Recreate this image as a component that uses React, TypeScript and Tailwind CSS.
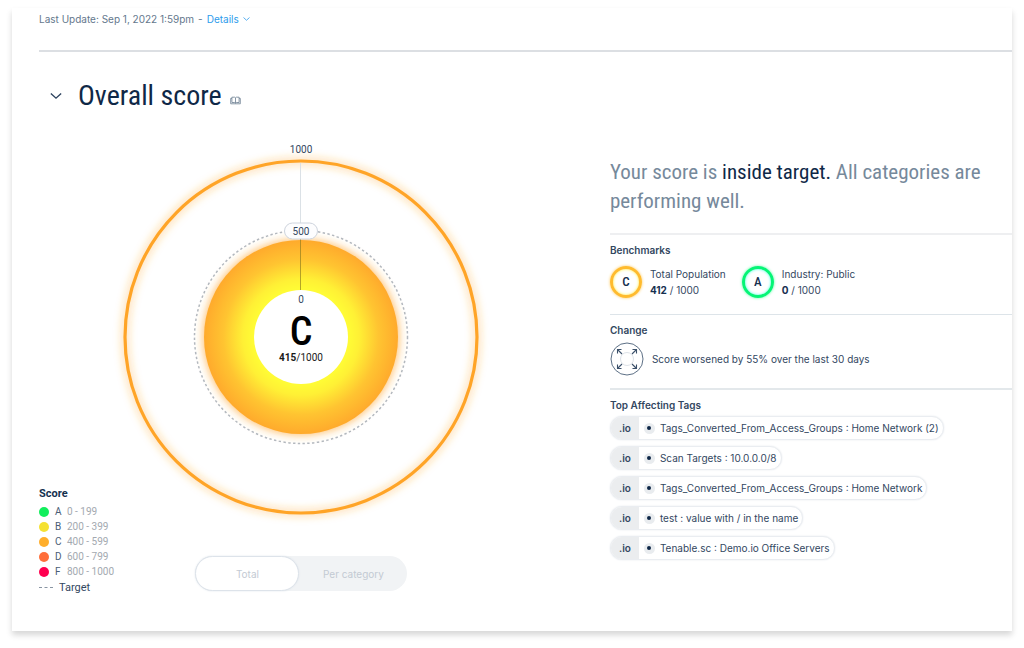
import React from "react";

const grades = [
  { grade: "A", range: "0 - 199", dot: "bg-[#12ee5c]" },
  { grade: "B", range: "200 - 399", dot: "bg-[#f5e132]" },
  { grade: "C", range: "400 - 599", dot: "bg-[#ffae2b]" },
  { grade: "D", range: "600 - 799", dot: "bg-[#ff6e3a]" },
  { grade: "F", range: "800 - 1000", dot: "bg-[#ff0050]" },
];

const tags = [
  "Tags_Converted_From_Access_Groups : Home Network (2)",
  "Scan Targets : 10.0.0.0/8",
  "Tags_Converted_From_Access_Groups : Home Network",
  "test : value with / in the name",
  "Tenable.sc : Demo.io Office Servers",
];

const benchmarks = [
  {
    grade: "C",
    name: "Total Population",
    score: "412",
    ring: "border-[#ffbb2e] shadow-[0_0_3px_#ffc95c,inset_0_0_3px_#fff03a]",
  },
  {
    grade: "A",
    name: "Industry: Public",
    score: "0",
    ring: "border-[#05f576] shadow-[0_0_3px_#5dfba4,inset_0_0_3px_#3dffe0]",
  },
];

const condensed = "font-['Roboto_Condensed',sans-serif]";

function Chevron({ className }: { className: string }) {
  return (
    <svg viewBox="0 0 14 8" className={className} fill="none" stroke="currentColor" strokeWidth="1.6" aria-hidden="true">
      <path d="M1 1l6 5.5L13 1" />
    </svg>
  );
}

function BookIcon() {
  return (
    <svg viewBox="0 0 11 9" className="h-[9px] w-[11px]" fill="none" stroke="#6b7d91" strokeWidth="0.8" aria-hidden="true">
      <path d="M5.5 1.8L4.700 1.200H1.900v5.300h2.800l.8.6.8-.6h2.800V1.200H6.300zM5.500 1.800v5.200" />
      <path d="M1.900 2.400H.7v5.400h9.600V2.400H9.100" />
    </svg>
  );
}

function ScoreChart() {
  return (
    <svg
      viewBox="-178 -197 356 376"
      className="w-[356px] max-w-full overflow-visible"
      role="img"
      aria-label="Overall score C, 415 out of 1000, target 500"
    >
      <defs>
        <radialGradient id="core" gradientUnits="userSpaceOnUse" cx="0" cy="0" r="97">
          <stop offset="0.5" stopColor="#fffb35" />
          <stop offset="0.6" stopColor="#fff035" />
          <stop offset="0.8" stopColor="#ffc431" />
          <stop offset="1" stopColor="#ffaa2c" />
        </radialGradient>
        <filter id="glow" x="-20%" y="-20%" width="140%" height="140%">
          <feGaussianBlur stdDeviation="4.500" />
        </filter>
      </defs>
      <circle r="176" fill="none" stroke="#ffa427" strokeOpacity="0.42" strokeWidth="6" filter="url(#glow)" />
      <circle r="176" fill="none" stroke="#ffa427" strokeWidth="3.200" />
      <circle r="98" fill="#ffa427" fillOpacity="0.7" filter="url(#glow)" />
      <circle r="106.500" fill="none" stroke="#b3b8be" strokeWidth="1.500" strokeDasharray="2.400 2.400" />
      <circle r="97" fill="url(#core)" />
      <path d="M-.5-174v67" stroke="#dbe1e6" />
      <path d="M-.5-98v51" stroke="#8a7a1e" strokeOpacity="0.65" />
      <circle r="47" fill="#fff" />
      <rect x="-16.500" y="-114" width="33" height="16" rx="8" fill="#fdfdfe" stroke="#ced4dd" />
      <g className="font-[Roboto,sans-serif]" textAnchor="middle" fontSize="10" fill="#33475f">
        <text y="-184">1000</text>
        <text y="-102">500</text>
        <text y="-34">0</text>
      </g>
      <text y="8" textAnchor="middle" fontSize="40" fill="#000" fontWeight="500" className="font-['Roboto_Condensed',sans-serif]">
        C
      </text>
      <text y="24" textAnchor="middle" fontSize="10" fill="#1a1a1a" className="font-[Roboto,sans-serif]">
        <tspan fontWeight="700">415</tspan>/1000
      </text>
    </svg>
  );
}

function ExpandIcon() {
  return (
    <svg viewBox="0 0 34 34" className="h-[34px] w-[34px]" fill="none" aria-hidden="true">
      <circle cx="17" cy="17" r="16" stroke="#5d7086" />
      <circle cx="17" cy="17" r="6.500" stroke="#dde2e8" />
      <g stroke="#3b506a" strokeWidth="1.100">
        <path d="M12 12L8 8M7.500 11.500v-4h4" />
        <path d="M22 12l4-4M22.500 7.500h4v4" />
        <path d="M12 22l-4 4M7.500 22.500v4h4" />
        <path d="M22 22l4 4M22.500 26.500h4v-4" />
      </g>
    </svg>
  );
}

export default function App() {
  return (
    <div className="bg-white px-3 pb-4 pt-2 font-[Inter,Roboto,sans-serif] text-[10px] leading-4 text-[#33475f]">
      <main className="bg-white pb-9 pl-[27px] shadow-[0_4px_6px_rgba(0,0,0,0.16)]">
        <header className="flex h-11 items-start gap-1 border-b-2 border-[#dcdfe3] pt-[3px] text-[#64788d]">
          <span>Last Update: Sep 1, 2022 1:59pm</span>
          <span>-</span>
          <button type="button" className="flex items-center gap-1 text-[#2d9cec]">
            Details
            <Chevron className="h-1 w-[7px]" />
          </button>
        </header>

        <div className="flex items-center gap-4 pl-[11px] pt-6">
          <button type="button" aria-label="Collapse overall score" className="text-[#2c425e]">
            <Chevron className="h-2 w-3" />
          </button>
          <div className="flex items-center gap-2">
            <h1 className={`${condensed} text-[28px] leading-10 text-[#0f2847]`}>Overall score</h1>
            <span className="pt-2">
              <BookIcon />
            </span>
          </div>
        </div>

        <div className="grid grid-cols-[minmax(0,1.42fr)_minmax(0,1fr)] pt-6">
          <section className="grid grid-cols-[80px_1fr_80px] pr-[46px]">
            <div className="self-end font-[Roboto,sans-serif] leading-[15px]">
              <h2 className="pb-[3px] text-[11px] font-bold text-[#16304f]">Score</h2>
              <ul>
                {grades.map((g) => (
                  <li key={g.grade} className="flex items-center whitespace-nowrap">
                    <span className={`mr-1.5 size-[10px] rounded-full ${g.dot}`} />
                    <span className="w-3 text-[#4a5d75]">{g.grade}</span>
                    <span className="text-[#a3a9b0]">{g.range}</span>
                  </li>
                ))}
                <li className="flex items-center gap-1.5 pt-px text-[11px]">
                  <span className="w-[14px] border-t border-dashed border-[#8995a3]" />
                  Target
                </li>
              </ul>
            </div>
            <div className="flex flex-col items-center gap-10 pb-1">
              <ScoreChart />
              <div className="flex h-[35px] w-[212px] rounded-full bg-[#f1f3f5] text-[#c3cad3]">
                <button
                  type="button"
                  aria-pressed="true"
                  className="w-[104px] rounded-full border border-[#dde3ea] bg-white shadow-[0_0_2px_#dde3ea]"
                >
                  Total
                </button>
                <button type="button" aria-pressed="false" className="flex-1">
                  Per category
                </button>
              </div>
            </div>
          </section>

          <section className="pt-[18px]">
            <p className={`${condensed} pb-[17px] pr-4 text-[21px] leading-[29px] text-[#76899b]`}>
              Your score is <strong className="font-normal text-[#0f2847]">inside target.</strong> All categories are
              performing well.
            </p>

            <div className="border-t-2 border-[#eeeff1] pb-4 pt-[7px]">
              <h2 className="font-semibold">Benchmarks</h2>
              <div className="flex gap-4 pt-2">
                {benchmarks.map((b) => (
                  <div key={b.name} className="flex items-center gap-2">
                    <span
                      className={`flex size-8 items-center justify-center rounded-full border-3 font-['Roboto_Condensed',sans-serif] text-[13px] font-medium text-[#16304f] ${b.ring}`}
                    >
                      {b.grade}
                    </span>
                    <div>
                      <div>{b.name}</div>
                      <div>
                        <b className="text-[#16304f]">{b.score}</b> / 1000
                      </div>
                    </div>
                  </div>
                ))}
              </div>
            </div>

            <div className="border-t border-[#dde4e9] pb-3 pt-[7px]">
              <h2 className="font-semibold">Change</h2>
              <div className="flex items-center gap-2 pt-1">
                <ExpandIcon />
                <span>Score worsened by 55% over the last 30 days</span>
              </div>
            </div>

            <div className="border-t-2 border-[#e3e8eb] pt-[7px]">
              <h2 className="font-semibold">Top Affecting Tags</h2>
              <ul className="flex flex-col items-start gap-1.5 pt-[3px]">
                {tags.map((tag) => (
                  <li
                    key={tag}
                    className="flex h-6 items-center overflow-hidden whitespace-nowrap rounded-full border border-[#eaedf1] bg-white pr-1 shadow-[0_0_2px_#e4e8ed]"
                  >
                    <span className="flex h-full w-7 items-center justify-center bg-[#ebedef] font-semibold">.io</span>
                    <span className="mx-[5px] flex size-[11px] items-center justify-center rounded-full bg-[#e9ecef]">
                      <span className="size-1 rounded-full bg-[#0f2847]" />
                    </span>
                    {tag}
                  </li>
                ))}
              </ul>
            </div>
          </section>
        </div>
      </main>
    </div>
  );
}
